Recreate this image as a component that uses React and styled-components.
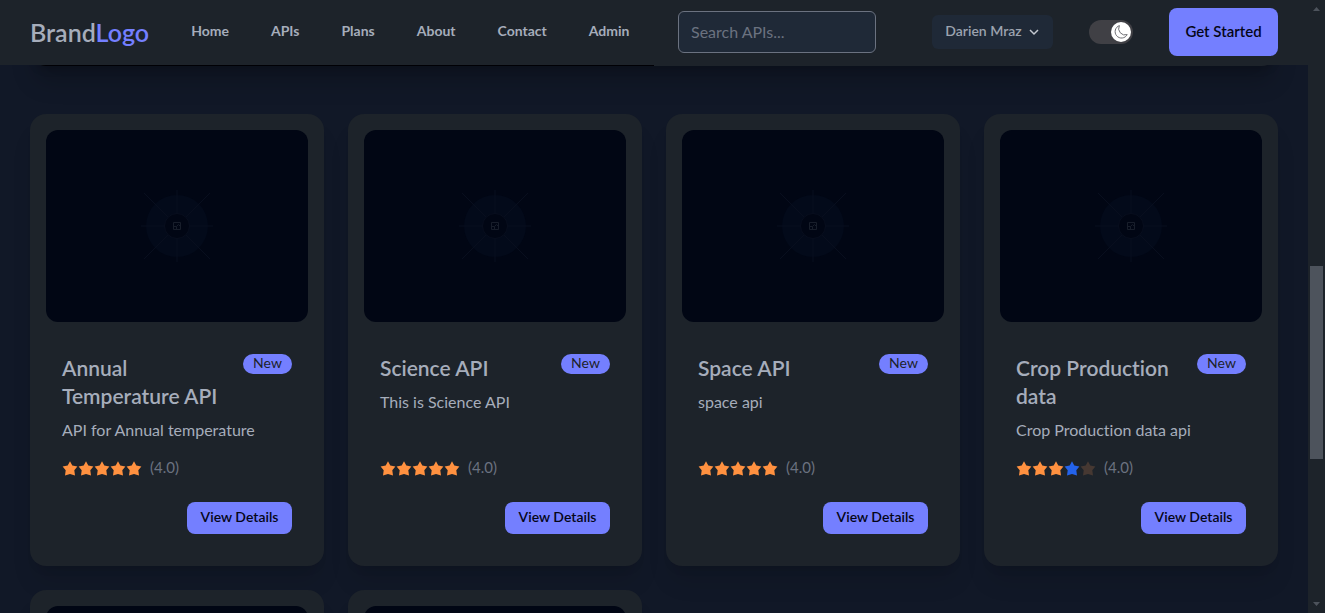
import React from "react";
import styled, { createGlobalStyle } from "styled-components";

const GlobalStyle = createGlobalStyle`
  *, *::before, *::after { box-sizing: border-box; }
  body {
    margin: 0;
    background: #111827;
    color: #a6adbb;
    font-family: Lato, "Open Sans", sans-serif;
    font-size: 16px;
    font-variant-ligatures: none;
    line-height: 24px;
  }
  button, input { font-family: inherit; }
  h2, p { margin: 0; }
`;

const Frame = styled.div`
  display: grid;
  grid-template-columns: minmax(0, 1fr) 17px;
  height: 100vh;
  overflow: hidden;
`;

const Page = styled.div`
  overflow: hidden;
  background: #111827;
`;

const Header = styled.header`
  position: relative;
  z-index: 1;
  display: flex;
  align-items: center;
  justify-content: space-between;
  height: 65px;
  padding: 0 30px 1px;
  background: #1d232a;
`;

const Group = styled.div`
  display: flex;
  align-items: center;
  gap: ${(p) => p.$gap}px;
`;

const Brand = styled.a`
  color: #a6adbb;
  font-size: 25px;
  font-weight: 600;
  line-height: 32px;
  text-decoration: none;
  span { color: #747fff; }
`;

const Nav = styled.nav`
  display: flex;
  gap: 42px;
  padding-bottom: 2px;
`;

const NavLink = styled.a`
  color: #a6adbb;
  font-size: 14px;
  font-weight: 700;
  line-height: 20px;
  text-decoration: none;
  white-space: nowrap;
`;

const Search = styled.input`
  width: 198px;
  height: 42px;
  margin-right: 20px;
  padding: 0 12px 2px;
  border: 1px solid #6b7280;
  border-radius: 6px;
  background: #1f2937;
  color: #a6adbb;
  font-size: 16px;
  &::placeholder { color: #6b7280; opacity: 1; }
`;

const UserButton = styled.button`
  display: flex;
  align-items: center;
  justify-content: center;
  gap: 6px;
  width: 121px;
  height: 34px;
  padding: 0 0 2px;
  border: 0;
  border-radius: 6px;
  background: #1f2937;
  color: #9ca3af;
  font-size: 14px;
  font-weight: 600;
  line-height: 20px;
  white-space: nowrap;
`;

const Switch = styled.label`
  display: flex;
  align-items: center;
  justify-content: flex-end;
  width: 44px;
  height: 24px;
  padding: 2px;
  border-radius: 12px;
  background: #404045;
  input { position: absolute; opacity: 0; }
`;

const Knob = styled.span`
  display: grid;
  place-items: center;
  width: 20px;
  height: 20px;
  border-radius: 50%;
  background: #fff;
`;

const PrimaryButton = styled.button`
  width: ${(p) => (p.$large ? 109 : 105)}px;
  height: ${(p) => (p.$large ? 48 : 32)}px;
  padding: 0 0 2px;
  border: 0;
  border-radius: 8px;
  background: #747fff;
  color: #050617;
  font-size: ${(p) => (p.$large ? 15 : 14)}px;
  font-weight: 600;
  line-height: 20px;
`;

const Main = styled.main`
  display: flex;
  flex-direction: column;
  gap: 48px;
  margin-top: -65px;
  padding: 0 30px;
`;

const Featured = styled.section`
  display: grid;
  grid-template-columns: 1fr 1fr;
  height: 66px;
  overflow: hidden;
  border-radius: 16px;
  background: #1d232a;
  box-shadow: 0 20px 25px -5px rgba(0, 0, 0, 0.2), 0 8px 10px -6px rgba(0, 0, 0, 0.2);
`;

const FeaturedImage = styled.div`
  background: #000005;
`;

const Grid = styled.section`
  display: grid;
  grid-template-columns: repeat(4, minmax(0, 1fr));
  gap: 24px;
`;

const Card = styled.article`
  display: flex;
  flex-direction: column;
  min-height: 452px;
  border-radius: 16px;
  background: #1d232a;
  box-shadow: 0 20px 25px -5px rgba(0, 0, 0, 0.1), 0 8px 10px -6px rgba(0, 0, 0, 0.1);
`;

const Figure = styled.div`
  display: grid;
  place-items: center;
  height: 192px;
  margin: 16px 16px 0;
  border-radius: 12px;
  background: #010614;
`;

const Body = styled.div`
  display: flex;
  flex: 1;
  flex-direction: column;
  padding: 32px;
`;

const TitleRow = styled.div`
  display: flex;
  align-items: flex-start;
  justify-content: space-between;
  gap: 16px;
  margin-bottom: 8px;
`;

const Title = styled.h2`
  font-size: 21px;
  font-weight: 600;
  line-height: 28px;
`;

const Badge = styled.span`
  flex: none;
  width: 49px;
  height: 20px;
  border-radius: 10px;
  background: #747fff;
  color: #1d232a;
  font-size: 14px;
  line-height: 18px;
  text-align: center;
`;

const Description = styled.p`
  flex: 1;
`;

const Rating = styled.div`
  display: flex;
  align-items: center;
  gap: 8px;
  margin: 16px 0 24px;
  color: #6b7280;
  font-size: 15px;
  line-height: 20px;
  svg { display: block; }
`;

const Score = styled.span`
  padding-bottom: 2px;
  line-height: 18px;
`;

const Actions = styled.div`
  display: flex;
  justify-content: flex-end;
`;

const ScrollTrack = styled.div`
  display: flex;
  flex-direction: column;
  align-items: center;
  justify-content: space-between;
  padding: 6px 2px;
  background: #1d232a;
`;

const ScrollRail = styled.div`
  display: grid;
  grid-template-rows: 129fr 100fr 71fr;
  flex: 1;
  align-self: stretch;
  margin: 6px 0;
`;

const ScrollThumb = styled.div`
  grid-row: 2;
  background: #4d535c;
`;

const star = "M8 1.2 10.3 5.6 15.4 6.4 12.3 10.2 13 15.4 8 14 3 15.4 3.7 10.2 0.6 6.4 5.7 5.6Z";

function Stars({ colors }) {
  return (
    <svg width="80" height="16" viewBox="0 0 80 16" role="img" aria-label="Rating">
      {colors.map((fill, i) => (
        <path key={i} d={star} fill={fill} transform={`translate(${i * 16} 0)`} />
      ))}
    </svg>
  );
}

function Placeholder() {
  return (
    <svg width="80" height="80" viewBox="-40 -40 80 80" aria-hidden="true">
      <circle r="31" fill="#030a1a" />
      <g stroke="#080e1e" strokeWidth="1">
        <path d="M0-36V36M-36 0H36M-33-33 33 33M-33 33 33-33" />
      </g>
      <circle r="12.5" fill="#010614" stroke="#080e1e" />
      <path
        d="M-3.5-3.5H3.5V3.5H-3.5ZM-3.5.5H-.5L1.5-1.5 3.5.5M-.5.5V3.5"
        fill="none"
        stroke="#181e2b"
      />
    </svg>
  );
}

const O = "#ff9140";
const five = [O, O, O, O, O];
const cards = [
  { title: "Annual Temperature API", text: "API for Annual temperature", stars: five },
  { title: "Science API", text: "This is Science API", stars: five },
  { title: "Space API", text: "space api", stars: five },
  { title: "Crop Production data", text: "Crop Production data api", stars: [O, O, O, "#2463eb", "#463832"] },
];

function ApiCard({ title, text, stars }) {
  return (
    <Card>
      <Figure><Placeholder /></Figure>
      {title && (
        <Body>
          <TitleRow>
            <Title>{title}</Title>
            <Badge>New</Badge>
          </TitleRow>
          <Description>{text}</Description>
          <Rating><Stars colors={stars} /><Score>(4.0)</Score></Rating>
          <Actions><PrimaryButton type="button">View Details</PrimaryButton></Actions>
        </Body>
      )}
    </Card>
  );
}

const links = ["Home", "APIs", "Plans", "About", "Contact", "Admin"];

export default function App() {
  return (
    <Frame>
      <GlobalStyle />
      <Page>
        <Header>
          <Group $gap={42}>
            <Brand href="#">Brand<span>Logo</span></Brand>
            <Nav>
              {links.map((l) => <NavLink key={l} href={`#${l.toLowerCase()}`}>{l}</NavLink>)}
            </Nav>
          </Group>
          <Group $gap={36}>
            <Search type="search" aria-label="Search APIs" placeholder="Search APIs..." />
            <UserButton type="button">
              Darien Mraz
              <svg width="12" height="12" viewBox="0 0 12 12" fill="none" stroke="#c3c8d0" strokeWidth="1.5" aria-hidden="true">
                <path d="M2 5 6 9 10 5" />
              </svg>
            </UserButton>
            <Switch>
              <input type="checkbox" role="switch" aria-label="Dark mode" defaultChecked />
              <Knob>
                <svg width="16" height="16" viewBox="0 0 16 16" fill="none" stroke="#707075" strokeWidth="1" strokeLinejoin="round" aria-hidden="true">
                  <path d="M6.4 1.6A6.4 6.4 0 1 0 14.2 10.6 6.4 6.4 0 0 1 6.4 1.6Z" />
                </svg>
              </Knob>
            </Switch>
            <PrimaryButton type="button" $large>Get Started</PrimaryButton>
          </Group>
        </Header>
        <Main>
          <Featured><FeaturedImage /></Featured>
          <Grid>
            {cards.map((c) => <ApiCard key={c.title} {...c} />)}
            <ApiCard />
            <ApiCard />
          </Grid>
        </Main>
      </Page>
      <ScrollTrack aria-hidden="true">
        <svg width="7" height="5" viewBox="0 0 7 5"><path d="M0 5 3.5 1 7 5Z" fill="#4d535c" /></svg>
        <ScrollRail><ScrollThumb /></ScrollRail>
        <svg width="7" height="5" viewBox="0 0 7 5"><path d="M0 0 3.5 4 7 0Z" fill="#4d535c" /></svg>
      </ScrollTrack>
    </Frame>
  );
}
